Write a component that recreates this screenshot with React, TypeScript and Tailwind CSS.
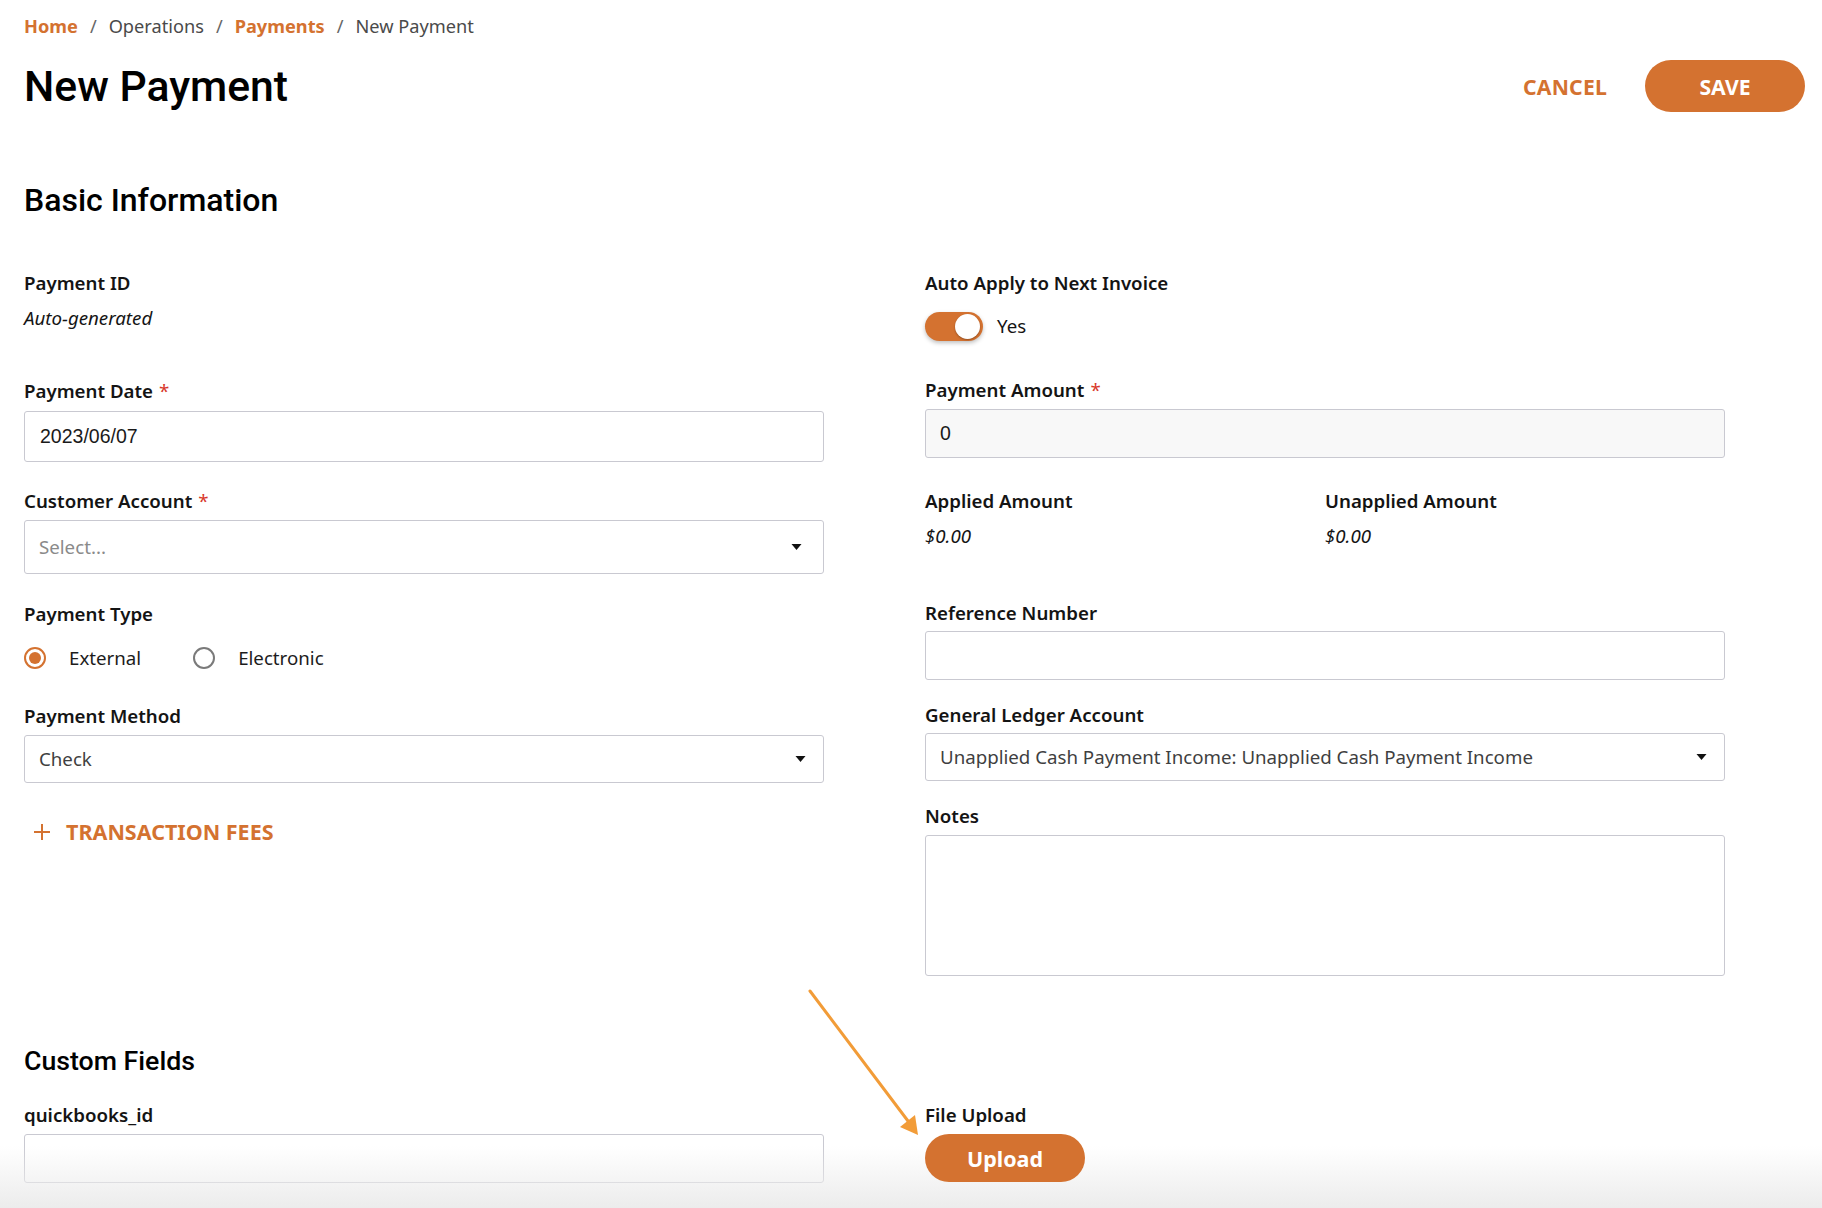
import React from "react";

// ── New Payment form ─────────────────────────────────────────────────────────
// Breadcrumb · header actions · Basic Information (2 cols) · Custom Fields

const BODY = "font-['Noto_Sans','Open_Sans',sans-serif]";
const HEAD = "font-['Roboto','Noto_Sans',sans-serif]";

function Label({ children, required }: { children: React.ReactNode; required?: boolean }) {
  return (
    <div className="text-[18.7px] leading-[24px] font-semibold text-[#141414]">
      {children}
      {required && <span className="ml-[6px] text-[#d8382b] font-normal">*</span>}
    </div>
  );
}

// small filled caret used by the selects
function Caret() {
  return (
    <svg viewBox="0 0 10 6" className="w-[11px] h-[6px]" fill="#111">
      <path d="M0 0h10L5 6z" />
    </svg>
  );
}

function SelectBox({ value, placeholder, height, caretRight }: { value?: string; placeholder?: string; height: string; caretRight: string }) {
  return (
    <div className={`${height} w-full flex items-center justify-between border border-[#c9c9d1] rounded-[3px] bg-white pl-[14px] ${caretRight}`}>
      {value ? (
        <span className="text-[18.7px] text-[#3f3f3f]">{value}</span>
      ) : (
        <span className="text-[18.7px] text-[#8a8a8a]">{placeholder}</span>
      )}
      <Caret />
    </div>
  );
}

function Radio({ label, checked }: { label: string; checked?: boolean }) {
  return (
    <div className="flex items-center">
      <span
        className={`w-[22px] h-[22px] rounded-full border-2 flex items-center justify-center ${
          checked ? "border-[#d47230]" : "border-[#7a7a7a]"
        }`}
      >
        {checked && <span className="w-[12px] h-[12px] rounded-full bg-[#d47230]" />}
      </span>
      <span className="ml-[23px] text-[18.7px] text-[#1c1c1c]">{label}</span>
    </div>
  );
}

export default function App() {
  return (
    <div className={`${BODY} relative h-[1208px] overflow-hidden bg-white text-[#141414]`}>
      <div className="pl-[24px] pr-[17px] pt-[14px]">
        {/* ── Breadcrumb ── */}
        <nav className="flex items-center text-[18.2px] leading-[24px]">
          <span className="font-bold text-[#d47230]">Home</span>
          <span className="mx-[12px] text-[#666]">/</span>
          <span className="text-[#4a4a4a]">Operations</span>
          <span className="mx-[12px] text-[#666]">/</span>
          <span className="font-bold text-[#d47230]">Payments</span>
          <span className="mx-[12px] text-[#666]">/</span>
          <span className="text-[#4a4a4a]">New Payment</span>
        </nav>

        {/* ── Title row ── */}
        <div className="mt-[22px] flex items-center justify-between h-[52px]">
          <h1 className={`${HEAD} text-[42.7px] leading-[52px] font-medium text-black`}>New Payment</h1>
          <div className="flex items-center">
            <button className="mt-[2px] text-[21.2px] font-bold tracking-[0.2px] text-[#d47230]">CANCEL</button>
            <button className="ml-[38px] w-[160px] h-[52px] pt-[2px] rounded-full bg-[#d47230] text-white text-[21.2px] font-bold">
              SAVE
            </button>
          </div>
        </div>

        {/* ── Basic Information ── */}
        <h2 className={`${HEAD} mt-[70px] text-[32px] leading-[36px] font-medium text-black`}>Basic Information</h2>

        <div className="mt-[53px] grid grid-cols-[800px_800px] gap-x-[101px] items-start">
          {/* left column */}
          <div className="flex flex-col">
            <Label>Payment ID</Label>
            <div className="mt-[11px] text-[18.7px] leading-[24px] italic">Auto-generated</div>

            <div className="mt-[49px]">
              <Label required>Payment Date</Label>
            </div>
            <input
              readOnly
              defaultValue="2023/06/07"
              className="mt-[8px] h-[51px] w-full border border-[#c9c9d1] rounded-[3px] px-[15px] text-[19.5px] text-[#1a1a1a] font-['Liberation_Sans',Arial,sans-serif] outline-none"
            />

            <div className="mt-[27px]">
              <Label required>Customer Account</Label>
            </div>
            <div className="mt-[7px]">
              <SelectBox placeholder="Select..." height="h-[54px]" caretRight="pr-[21px]" />
            </div>

            <div className="mt-[28px]">
              <Label>Payment Type</Label>
            </div>
            <div className="mt-[20px] h-[24px] flex items-center gap-[52px]">
              <Radio label="External" checked />
              <Radio label="Electronic" />
            </div>

            <div className="mt-[34px]">
              <Label>Payment Method</Label>
            </div>
            <div className="mt-[7px]">
              <SelectBox value="Check" height="h-[48px]" caretRight="pr-[17px]" />
            </div>

            <button className="mt-[35px] h-[28px] flex items-center pl-[9px] text-[#d47230]">
              <svg viewBox="0 0 18 18" className="w-[18px] h-[18px]" fill="none" stroke="currentColor" strokeWidth={2}>
                <path d="M9 1v16M1 9h16" />
              </svg>
              <span className="ml-[15px] text-[21.5px] font-bold">TRANSACTION FEES</span>
            </button>
          </div>

          {/* right column */}
          <div className="flex flex-col">
            <Label>Auto Apply to Next Invoice</Label>
            <div className="mt-[17px] flex items-center">
              <span className="relative w-[58px] h-[29px] rounded-full bg-[#d47230] shadow-[0_2px_4px_rgba(0,0,0,0.25)]">
                <span className="absolute right-[3px] top-[2px] w-[25px] h-[25px] rounded-full bg-white shadow-[0_1px_2px_rgba(0,0,0,0.3)]" />
              </span>
              <span className="ml-[14px] text-[18.7px]">Yes</span>
            </div>

            <div className="mt-[37px]">
              <Label required>Payment Amount</Label>
            </div>
            <input
              readOnly
              defaultValue="0"
              className="mt-[7px] h-[49px] w-full border border-[#c9c9d1] rounded-[3px] bg-[#f8f8f8] px-[14px] text-[19.5px] text-[#1a1a1a] font-['Liberation_Sans',Arial,sans-serif] outline-none"
            />

            <div className="mt-[31px] grid grid-cols-2">
              <div>
                <Label>Applied Amount</Label>
                <div className="mt-[11px] text-[18.7px] leading-[24px] italic">$0.00</div>
              </div>
              <div>
                <Label>Unapplied Amount</Label>
                <div className="mt-[11px] text-[18.7px] leading-[24px] italic">$0.00</div>
              </div>
            </div>

            <div className="mt-[53px]">
              <Label>Reference Number</Label>
            </div>
            <input className="mt-[6px] h-[49px] w-full border border-[#c9c9d1] rounded-[3px] px-[14px] outline-none" />

            <div className="mt-[23px]">
              <Label>General Ledger Account</Label>
            </div>
            <div className="mt-[6px]">
              <SelectBox
                value="Unapplied Cash Payment Income: Unapplied Cash Payment Income"
                height="h-[48px]"
                caretRight="pr-[17px]"
              />
            </div>

            <div className="mt-[23px]">
              <Label>Notes</Label>
            </div>
            <textarea className="mt-[7px] h-[141px] w-full resize-none border border-[#c9c9d1] rounded-[3px] outline-none" />
          </div>
        </div>

        {/* ── Custom Fields ── */}
        <h2 className={`${HEAD} mt-[69px] text-[26.7px] leading-[32px] font-medium text-black`}>Custom Fields</h2>

        <div className="mt-[26px] grid grid-cols-[800px_800px] gap-x-[101px] items-start">
          <div className="flex flex-col">
            <Label>quickbooks_id</Label>
            <input className="mt-[7px] h-[49px] w-full border border-[#c9c9d1] rounded-[3px] px-[14px] outline-none bg-transparent" />
          </div>
          <div className="flex flex-col items-start">
            <Label>File Upload</Label>
            <button className="relative z-10 mt-[7px] w-[160px] h-[48px] pt-[2px] rounded-full bg-[#d47230] text-white text-[21.5px] font-bold">
              Upload
            </button>
          </div>
        </div>
      </div>

      {/* annotation arrow pointing at the upload button */}
      <svg className="absolute left-[800px] top-[980px] w-[130px] h-[160px] pointer-events-none z-20" viewBox="0 0 130 160">
        <path d="M10 11 L111 145" stroke="#f29c38" strokeWidth={3} strokeLinecap="round" />
        <path d="M118 155 L100 147 L115 135 Z" fill="#f29c38" />
      </svg>

      {/* bottom fade */}
      <div className="pointer-events-none absolute inset-x-0 bottom-0 h-[62px] bg-linear-to-b from-white/0 to-[#ececec]" />
    </div>
  );
}
